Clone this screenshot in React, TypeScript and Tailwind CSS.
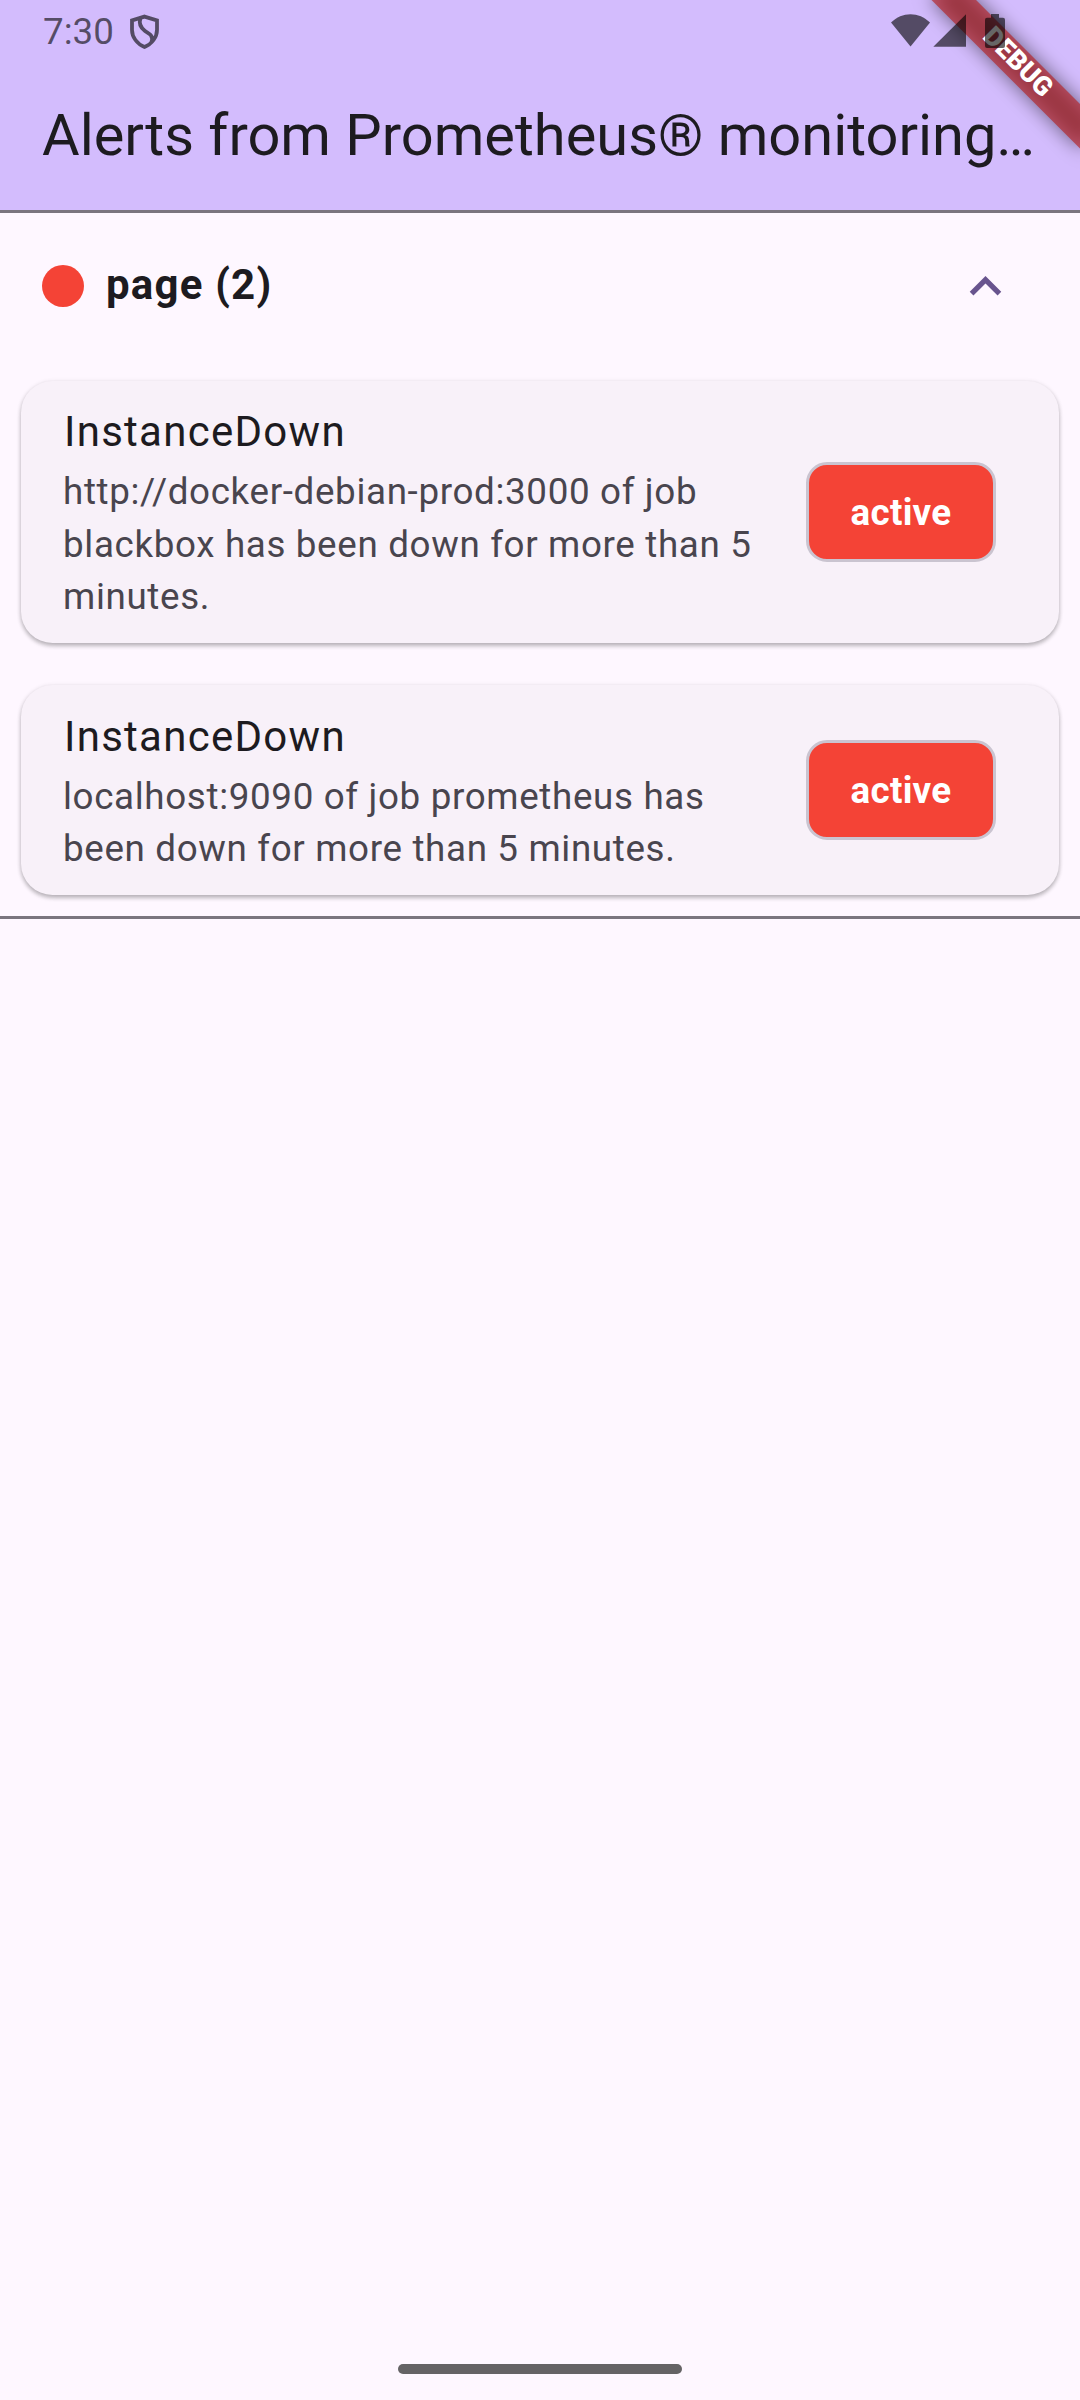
import React from "react";

type Alert = { name: string; lines: string[] };

const alerts: Alert[] = [
  {
    name: "InstanceDown",
    lines: [
      "http://docker-debian-prod:3000 of job",
      "blackbox has been down for more than 5",
      "minutes.",
    ],
  },
  {
    name: "InstanceDown",
    lines: ["localhost:9090 of job prometheus has", "been down for more than 5 minutes."],
  },
];

function ShieldIcon() {
  return (
    <svg width="30" height="36" viewBox="0 0 30 36" fill="none" stroke="black" strokeOpacity="0.6" className="ml-[16px] mt-[13.5px]">
      <path
        d="M14.5 2.6 L27 6.4 V16 C27 23 22 30 14.5 33 C7 30 2 23 2 16 V6.4 Z M10.5 4 C8.5 10 11 14 15 17 C20 20 23.5 22 21.5 28"
        strokeWidth="3.8"
      />
    </svg>
  );
}

function StatusIcons() {
  return (
    <svg width="120" height="50" viewBox="888 0 120 50" fill="black" fillOpacity="0.6" className="absolute left-[888px] top-0 z-20">
      <path d="M891 22.6 C902 11.4 919 11.4 930 22.6 L910.5 46.5 Z" />
      <path d="M966 14.3 V46.8 H933.3 Z" />
      <path d="M991 14 H999 V17.7 H1003 Q1005 17.7 1005 19.7 V46 Q1005 48 1003 48 H987 Q985 48 985 46 V19.7 Q985 17.7 987 17.7 H991 Z" />
    </svg>
  );
}

function DebugBanner() {
  return (
    <svg width="200" height="200" viewBox="880 0 200 200" className="absolute right-0 top-0 z-10">
      <defs>
        <filter id="soft" x="-20%" y="-100%" width="140%" height="300%">
          <feGaussianBlur stdDeviation="9.6" />
        </filter>
      </defs>
      <g transform="translate(1080 0) rotate(45)">
        <rect x="-105" y="73.5" width="210" height="31.5" fill="black" fillOpacity="0.5" filter="url(#soft)" />
        <rect x="-105" y="73.5" width="210" height="31.5" fill="#b71c1c" fillOpacity="0.627" />
        <text x="0" y="96.3" textAnchor="middle" fill="white" className="font-[Roboto] text-[26.8px] font-black">
          DEBUG
        </text>
      </g>
    </svg>
  );
}

function AlertCard({ alert }: { alert: Alert }) {
  return (
    <article className="flex items-center justify-between rounded-[31.5px] bg-[#f8f1f9] py-[21px] pl-[42px] pr-[63px] shadow-[0_3px_4px_rgba(0,0,0,0.22),0_1px_5px_rgba(0,0,0,0.12)]">
      <div>
        <h2 className="relative -top-[1.6px] left-px text-[42px] leading-[63px] tracking-[1.27px] text-[#1d1b20]">{alert.name}</h2>
        <p className="relative top-[1.4px] text-[36.75px] leading-[52.4px] tracking-[0.656px] text-[#49454e]">
          {alert.lines.map((line) => (
            <span key={line} className="block whitespace-nowrap">
              {line}
            </span>
          ))}
        </p>
      </div>
      <span className="flex h-[100px] w-[190px] items-center justify-center rounded-[21px] border-3 border-[#cac4d0] bg-[#f44336] text-[36.75px] font-bold tracking-[0.26px] text-white">
        active
      </span>
    </article>
  );
}

export default function App() {
  return (
    <div className="relative flex h-[2400px] w-[1080px] flex-col overflow-hidden bg-[#fef7ff] font-[Roboto,sans-serif]">
      <header className="h-[213px] border-b-3 border-[#7b757f] bg-[#d3bcfd]">
        <div className="flex h-[63px] pl-[43px]">
          <span className="mt-[10px] text-[36.75px] leading-[43px] text-black/60">7:30</span>
          <ShieldIcon />
        </div>
        <h1 className="px-[42px] pt-[36px] text-[57.75px] leading-[73px] whitespace-nowrap text-[#1d1b20]">
          Alerts from Prometheus® monitoring…
        </h1>
      </header>
      <StatusIcons />
      <DebugBanner />

      <section className="border-b-3 border-[#7b757f] pb-[21px]">
        <div className="flex h-[146px] items-center pl-[42px] pr-[63px]">
          <span className="size-[42px] rounded-full bg-[#f44336]" />
          <span className="relative -top-[2px] ml-[22px] flex-1 text-[42px] leading-[63px] font-bold tracking-[1.2px] text-[#1d1b20]">page (2)</span>
          <svg width="63" height="63" viewBox="0 0 24 24" fill="#68548e">
            <path d="M12 8l-6 6 1.41 1.41L12 10.83l4.59 4.58L18 14z" />
          </svg>
        </div>
        <div className="flex flex-col gap-[42px] px-[21px] pt-[22px]">
          {alerts.map((alert) => (
            <AlertCard key={alert.lines[0]} alert={alert} />
          ))}
        </div>
      </section>

      <div className="mt-auto mb-[26px] h-[10px] w-[284px] self-center rounded-full bg-[#656365]" />
    </div>
  );
}
